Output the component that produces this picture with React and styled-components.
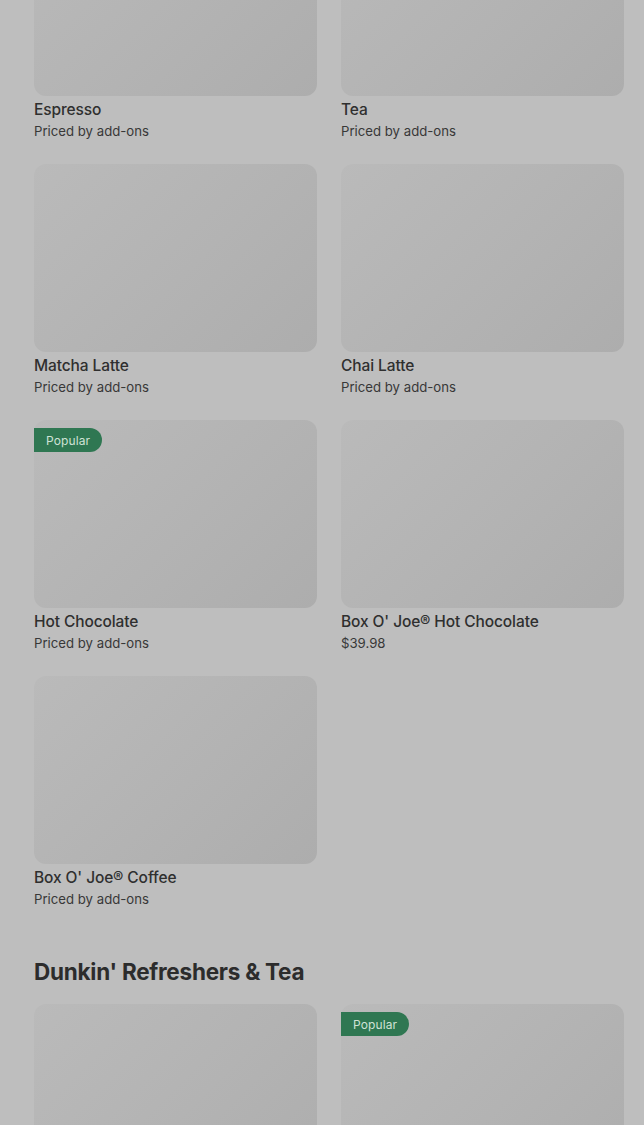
import React from "react";
import styled, { createGlobalStyle } from "styled-components";

const GlobalStyle = createGlobalStyle`
  html, body {
    margin: 0;
    padding: 0;
    background: #bebebe;
  }
  body {
    font-family: Inter, "Noto Sans", "Liberation Sans", sans-serif;
    color: #303030;
  }
`;

const Page = styled.main`
  padding: 0 20px 40px 34px;
  margin-top: -92px;
  overflow: hidden;
`;

const Grid = styled.div`
  display: grid;
  grid-template-columns: 283px 283px;
  column-gap: 24px;
  row-gap: 23px;
`;

const Item = styled.div`
  display: flex;
  flex-direction: column;
`;

const Thumb = styled.div`
  position: relative;
  height: 188px;
  border-radius: 12px;
  background: linear-gradient(135deg, #bababa 0%, #b3b3b3 55%, #adadad 100%);
`;

const Badge = styled.span`
  position: absolute;
  top: 8px;
  left: 0;
  height: 24px;
  padding: 0 12px 0 12px;
  display: flex;
  align-items: center;
  background: #2f7752;
  color: #cfe2d6;
  font-size: 12px;
  letter-spacing: 0.1px;
  border-radius: 0 12px 12px 0;
`;

const Name = styled.div`
  margin-top: 4px;
  font-size: 15.5px;
  line-height: 20px;
  font-weight: 500;
  letter-spacing: -0.1px;
  color: #2f2f2f;
`;

const Price = styled.div`
  margin-top: 1px;
  font-size: 13.2px;
  line-height: 20px;
  color: #383838;
`;

const SectionTitle = styled.h2`
  margin: 49px 0 18px;
  font-size: 22.5px;
  line-height: 28px;
  font-weight: 700;
  letter-spacing: -0.25px;
  color: #2c2c2c;
`;

const hot = [
  { name: "Espresso", price: "Priced by add-ons" },
  { name: "Tea", price: "Priced by add-ons" },
  { name: "Matcha Latte", price: "Priced by add-ons" },
  { name: "Chai Latte", price: "Priced by add-ons" },
  { name: "Hot Chocolate", price: "Priced by add-ons", popular: true },
  { name: "Box O' Joe® Hot Chocolate", price: "$39.98" },
  { name: "Box O' Joe® Coffee", price: "Priced by add-ons" },
];

const refreshers = [
  { name: "", price: "" },
  { name: "", price: "", popular: true },
];

const MenuItem = ({ item }) => (
  <Item>
    <Thumb>{item.popular && <Badge>Popular</Badge>}</Thumb>
    {item.name && <Name>{item.name}</Name>}
    {item.price && <Price>{item.price}</Price>}
  </Item>
);

export default function App() {
  return (
    <>
      <GlobalStyle />
      <Page>
        <Grid>
          {hot.map((item) => (
            <MenuItem key={item.name} item={item} />
          ))}
        </Grid>
        <SectionTitle>Dunkin' Refreshers &amp; Tea</SectionTitle>
        <Grid>
          {refreshers.map((item, i) => (
            <MenuItem key={i} item={item} />
          ))}
        </Grid>
      </Page>
    </>
  );
}
